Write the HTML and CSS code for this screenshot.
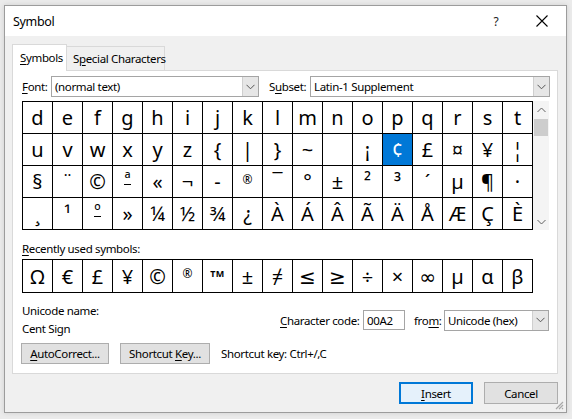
FILE: index.html
```html
<!DOCTYPE html>
<html>
<head>
<meta charset="utf-8">
<link rel="stylesheet" href="styles.css">
</head>
<body>
<div class="dialog">
  <div class="titlebar">
    <span class="title">Symbol</span>
    <span class="tbtn help">?</span>
    <span class="tbtn close"><svg width="12" height="12" viewBox="0 0 12 12"><path d="M0.5 0.5L11.5 11.5M11.5 0.5L0.5 11.5" stroke="#000" stroke-width="1.1" fill="none"/></svg></span>
  </div>
  <div class="body">
    <div class="tabs">
      <div class="tab active"><span><u>S</u>ymbols</span></div>
      <div class="tab"><span>S<u>p</u>ecial Characters</span></div>
    </div>
    <div class="panel">
      <div class="row-font">
        <label class="lbl lbl-font"><u>F</u>ont:</label>
        <div class="select sel-font"><span class="sel-text">(normal text)</span><span class="sel-btn"><svg width="9" height="6" viewBox="0 0 9 6"><path d="M0.5 0.8L4.5 4.8L8.5 0.8" stroke="#555" fill="none"/></svg></span></div>
        <label class="lbl lbl-subset">S<u>u</u>bset:</label>
        <div class="select sel-subset"><span class="sel-text">Latin-1 Supplement</span><span class="sel-btn"><svg width="9" height="6" viewBox="0 0 9 6"><path d="M0.5 0.8L4.5 4.8L8.5 0.8" stroke="#555" fill="none"/></svg></span></div>
      </div>
      <div class="charwrap">
        <div class="chargrid">
          <div class="c">d</div><div class="c">e</div><div class="c">f</div><div class="c">g</div><div class="c">h</div><div class="c">i</div><div class="c">j</div><div class="c">k</div><div class="c">l</div><div class="c">m</div><div class="c">n</div><div class="c">o</div><div class="c">p</div><div class="c">q</div><div class="c">r</div><div class="c">s</div><div class="c">t</div>
          <div class="c">u</div><div class="c">v</div><div class="c">w</div><div class="c">x</div><div class="c">y</div><div class="c">z</div><div class="c">{</div><div class="c">|</div><div class="c">}</div><div class="c">~</div><div class="c"></div><div class="c">¡</div><div class="c sel">¢</div><div class="c">£</div><div class="c">¤</div><div class="c">¥</div><div class="c">¦</div>
          <div class="c">§</div><div class="c">¨</div><div class="c">©</div><div class="c ord"><span>ª</span></div><div class="c">«</div><div class="c">¬</div><div class="c">-</div><div class="c small">®</div><div class="c">¯</div><div class="c">°</div><div class="c">±</div><div class="c">²</div><div class="c">³</div><div class="c">´</div><div class="c">µ</div><div class="c">¶</div><div class="c">·</div>
          <div class="c">¸</div><div class="c">¹</div><div class="c ord"><span>º</span></div><div class="c">»</div><div class="c">¼</div><div class="c">½</div><div class="c">¾</div><div class="c">¿</div><div class="c">À</div><div class="c">Á</div><div class="c">Â</div><div class="c">Ã</div><div class="c">Ä</div><div class="c">Å</div><div class="c">Æ</div><div class="c">Ç</div><div class="c">È</div>
        </div>
        <div class="scrollbar">
          <div class="sb-btn"><svg width="9" height="6" viewBox="0 0 9 6"><path d="M0.5 5L4.5 1L8.5 5" stroke="#606060" fill="none"/></svg></div>
          <div class="sb-thumb"></div>
          <div class="sb-track"></div>
          <div class="sb-btn"><svg width="9" height="6" viewBox="0 0 9 6"><path d="M0.5 1L4.5 5L8.5 1" stroke="#606060" fill="none"/></svg></div>
        </div>
      </div>
      <div class="recent-label"><u>R</u>ecently used symbols:</div>
      <div class="recent">
        <div class="c">Ω</div><div class="c">€</div><div class="c">£</div><div class="c">¥</div><div class="c">©</div><div class="c small">®</div><div class="c tm">TM</div><div class="c">±</div><div class="c">≠</div><div class="c">≤</div><div class="c">≥</div><div class="c">÷</div><div class="c">×</div><div class="c">∞</div><div class="c">µ</div><div class="c">α</div><div class="c">β</div>
      </div>
      <div class="info">
        <div class="info-left">
          <div class="line">Unicode name:</div>
          <div class="line line2">Cent Sign</div>
        </div>
        <label class="lbl lbl-code"><u>C</u>haracter code:</label>
        <div class="input">00A2</div>
        <label class="lbl lbl-from">fro<u>m</u>:</label>
        <div class="select sel-from"><span class="sel-text">Unicode (hex)</span><span class="sel-btn"><svg width="9" height="6" viewBox="0 0 9 6"><path d="M0.5 0.8L4.5 4.8L8.5 0.8" stroke="#555" fill="none"/></svg></span></div>
      </div>
      <div class="btnrow">
        <div class="btn btn-auto"><span><u>A</u>utoCorrect...</span></div>
        <div class="btn btn-short"><span>Shortcut <u>K</u>ey...</span></div>
        <span class="shortcut-text">Shortcut key: Ctrl+/,C</span>
      </div>
    </div>
    <div class="footer">
      <div class="btn btn-foot default"><span><u>I</u>nsert</span></div>
      <div class="btn btn-foot"><span>Cancel</span></div>
    </div>
  </div>
  <svg class="grip" width="9" height="9" viewBox="0 0 9 9"><path d="M8 1L1 8M8 4L4 8M8 7L7 8" stroke="#a8a8a8" stroke-width="1.2" fill="none"/></svg>
</div>
</body>
</html>
```

FILE: styles.css
```css
* { box-sizing: border-box; }
html, body { margin: 0; padding: 0; }
body {
  background: #ebebeb;
  width: 572px;
  height: 419px;
  overflow: hidden;
  font-family: "Noto Sans", "Open Sans", sans-serif;
  font-size: 11.5px;
  letter-spacing: -0.35px;
  color: #000;
}
u { text-decoration: underline; text-underline-offset: 2px; }
.dialog {
  position: relative;
  margin: 5px 0 0 4px;
  width: 563px;
  height: 408px;
  border: 1px solid #9c9c9c;
  background: #f0f0f0;
  display: flex;
  flex-direction: column;
  box-shadow: 0 0 5px rgba(0,0,0,0.12);
}
.titlebar {
  height: 30px;
  flex: none;
  background: #fff;
  display: flex;
  align-items: center;
  padding-left: 8px;
  font-size: 12.5px;
}
.title { flex: 1; }
.tbtn {
  width: 46px;
  height: 30px;
  display: flex;
  align-items: center;
  justify-content: center;
}
.help { font-size: 12px; color: #222; }
.close { margin-right: 1px; }
.body { flex: 1; display: flex; flex-direction: column; }
.tabs {
  margin: 7px 0 0 7px;
  height: 27px;
  display: flex;
  align-items: flex-end;
  flex: none;
}
.tab {
  height: 24px;
  width: 98px;
  padding-left: 6px;
  display: flex;
  align-items: center;
  white-space: nowrap;
  border: 1px solid #d9d9d9;
  border-left: none;
  border-bottom: none;
  background: #f0f0f0;
}
.tab.active {
  height: 27px;
  width: 55px;
  padding-left: 7px;
  border-left: 1px solid #d9d9d9;
  background: #fff;
  margin-bottom: -1px;
  position: relative;
  z-index: 1;
  padding-bottom: 2px;
}
.panel {
  margin: 0 8px 0 7px;
  height: 304px;
  flex: none;
  background: #fff;
  border: 1px solid #d9d9d9;
  padding: 5px 0 0 9px;
}
.row-font { display: flex; align-items: center; height: 21px; }
.lbl { white-space: nowrap; }
.lbl-font { width: 29px; }
.lbl-subset { width: 41px; margin-left: 10px; }
.select {
  height: 21px;
  border: 1px solid #a5a5a5;
  background: #fff;
  display: flex;
  align-items: stretch;
}
.sel-text { flex: 1; padding-left: 3px; display: flex; align-items: center; white-space: nowrap; }
.sel-btn {
  width: 16px;
  background: #e6e6e6;
  border-left: 1px solid #cfcfcf;
  display: flex;
  align-items: center;
  justify-content: center;
}
.sel-font { width: 208px; }
.sel-subset { width: 240px; }
.charwrap { margin-top: 4px; display: flex; }
.chargrid {
  display: grid;
  grid-template-columns: repeat(17, 30px);
  grid-auto-rows: 32px;
  border-top: 1px solid #000;
  border-left: 1px solid #000;
}
.c {
  border-right: 1px solid #000;
  border-bottom: 1px solid #000;
  display: flex;
  align-items: center;
  justify-content: center;
  font-family: "Noto Sans", "DejaVu Sans", sans-serif;
  font-size: 20px;
  letter-spacing: 0;
  line-height: 1;
  padding-top: 1px;
}
.c.sel { background: #0078d7; color: #fff; }
.c.small { font-size: 12px; align-items: flex-start; padding-top: 8px; }
.c.ord span { font-size: 17px; border-bottom: 1.5px solid #000; line-height: 12px; height: 12px; display: block; margin-top: -6px; }
.scrollbar {
  width: 16px;
  height: 129px;
  background: #f4f4f4;
  display: flex;
  flex-direction: column;
  align-items: center;
}
.sb-btn {
  width: 16px;
  height: 17px;
  display: flex;
  align-items: center;
  justify-content: center;
}
.sb-thumb { width: 14px; height: 17px; margin-top: 1px; background: #cdcdcd; }
.sb-track { flex: 1; }
.recent-label { margin-top: 12px; height: 14px; line-height: 14px; }
.recent {
  margin-top: 3px;
  display: grid;
  grid-template-columns: repeat(17, 30px);
  grid-auto-rows: 33px;
  border-top: 1px solid #000;
  border-left: 1px solid #000;
  width: 511px;
}
.recent .tm { font-size: 9px; font-weight: bold; align-items: flex-start; padding-top: 9px; letter-spacing: 0.3px; }
.info { margin-top: 10px; display: flex; align-items: center; }
.info-left { width: 258px; }
.line { height: 16px; line-height: 16px; }
.line2 { margin-top: 2px; }
.lbl-code { width: 83px; }
.input {
  width: 42px;
  height: 20px;
  border: 1px solid #a5a5a5;
  padding-left: 3px;
  display: flex;
  align-items: center;
}
.lbl-from { width: 30px; margin-left: 9px; }
.sel-from { width: 105px; }
.btnrow { margin-top: 6px; display: flex; align-items: center; }
.btn {
  height: 21px;
  background: #e1e1e1;
  border: 1px solid #adadad;
  display: flex;
  align-items: center;
  justify-content: center;
  white-space: nowrap;
}
.btn-auto { width: 88px; margin-left: -1px; }
.btn-short { width: 90px; margin-left: 11px; }
.shortcut-text { margin-left: 11px; }
.footer {
  display: flex;
  justify-content: flex-end;
  gap: 11px;
  padding: 8px 8px 0 0;
}
.btn-foot { width: 74px; height: 22px; }
.btn-foot.default { border: 2px solid #0078d7; background: #e5f1fb; }
.grip { position: absolute; right: 2px; bottom: 2px; }
```
